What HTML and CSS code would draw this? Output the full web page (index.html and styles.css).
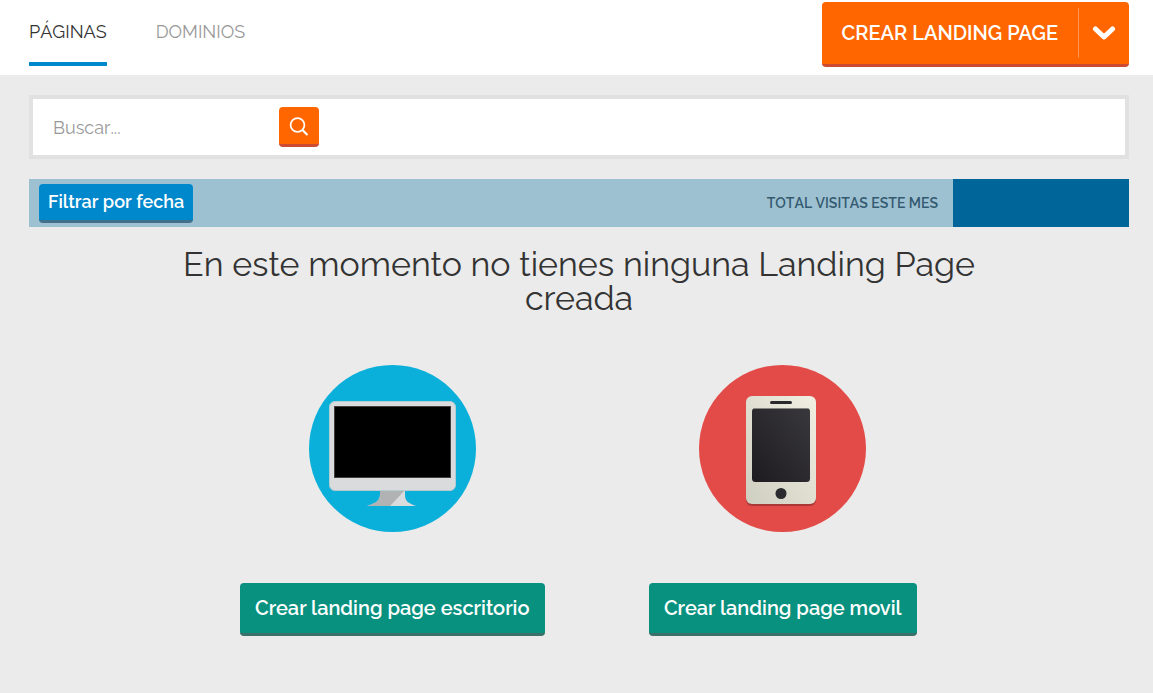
FILE: index.html
```html
<!DOCTYPE html>
<html lang="es">
<head>
  <meta charset="UTF-8">
  <title>Landing Pages</title>
  <meta name="viewport" content="width=device-width, initial-scale=1.0">
  <link rel="stylesheet" href="styles.css">
</head>
<body>
  <header class="topbar">
    <nav class="tabs">
      <a class="tab active" href="#paginas">PÁGINAS</a>
      <a class="tab" href="#dominios">DOMINIOS</a>
    </nav>
    <div class="create">
      <button class="create-main" type="button">CREAR LANDING PAGE</button>
      <button class="create-toggle" type="button" aria-label="Más opciones">
        <svg width="24" height="16" viewBox="0 0 24 16"><path d="M3.500 4l8.500 8 8.500-8" fill="none" stroke="#fff" stroke-width="5" stroke-linecap="round" stroke-linejoin="round"/></svg>
      </button>
    </div>
  </header>

  <main>
    <form class="search">
      <input class="search-input" type="text" placeholder="Buscar..." aria-label="Buscar">
      <button class="search-button" type="button" aria-label="Buscar">
        <svg width="20" height="20" viewBox="0 0 20 20" fill="none" stroke="#fff"><circle cx="8.500" cy="9" r="6.900" stroke-width="1.700"/><path d="M13.500 14l5 5" stroke-width="2.200"/></svg>
      </button>
    </form>

    <div class="stats">
      <button class="filter" type="button">Filtrar por fecha</button>
      <span class="stats-label">TOTAL VISITAS ESTE MES</span>
      <div class="stats-total"></div>
    </div>

    <section class="empty">
      <h1>En este momento no tienes ninguna Landing Page creada</h1>
      <div class="choices">
        <div class="choice">
          <svg class="device" viewBox="0 0 167 167">
            <circle cx="83.500" cy="83.500" r="83.500" fill="#0ab0d9"/>
            <path d="M71 125h25v5c0 6 3 8 11 11H58c9-3 13-5 13-12z" fill="#dadbdc"/>
            <path d="M71 125h25L81 141H58c9-3 13-5 13-12z" fill="#b1b2b3"/>
            <rect x="20.500" y="36.500" width="126" height="89" rx="5.500" fill="#dadbdc" stroke="#b5cbd2"/>
            <rect x="25.500" y="41.500" width="116" height="71" fill="#000" stroke="#433f40"/>
          </svg>
          <button class="choice-button" type="button">Crear landing page escritorio</button>
        </div>
        <div class="choice">
          <svg class="device" viewBox="0 0 167 167">
            <defs>
              <linearGradient id="shell" x1="0" y1="1" x2="1" y2="0"><stop offset="0" stop-color="#cfcfc1"/><stop offset="1" stop-color="#f0efe2"/></linearGradient>
              <linearGradient id="glass" x1="0" y1="1" x2="1" y2="0"><stop offset="0" stop-color="#1d1b20"/><stop offset="1" stop-color="#39383c"/></linearGradient>
            </defs>
            <circle cx="83.500" cy="83.500" r="83.500" fill="#e34b48"/>
            <rect x="47" y="33" width="70" height="108" rx="6" fill="#ab3836"/>
            <rect x="47" y="31" width="70" height="108" rx="6" fill="url(#shell)"/>
            <rect x="71" y="36" width="22" height="3" rx="1.500" fill="#29282c"/>
            <rect x="53" y="43" width="58" height="74" rx="3.500" fill="url(#glass)"/>
            <path d="M55 43.500h54" stroke="#88877f"/>
            <circle cx="82" cy="128.500" r="5.500" fill="#2b2a2e"/>
          </svg>
          <button class="choice-button" type="button">Crear landing page movil</button>
        </div>
      </div>
    </section>
  </main>
</body>
</html>
```
FILE: styles.css
```css
* {
  box-sizing: border-box;
}

body {
  margin: 0;
  font-family: Raleway, Lato, sans-serif;
  color: #333;
  background-color: #ebebeb;
}

button {
  border: none;
  padding: 0;
  font-family: inherit;
  font-weight: 600;
  color: #fff;
  cursor: pointer;
}

svg {
  display: block;
}

.topbar {
  display: flex;
  justify-content: space-between;
  align-items: flex-start;
  height: 75px;
  padding: 2px 24px 0 29px;
  background-color: #fff;
}

.tabs {
  display: flex;
  gap: 49px;
}

.tab {
  height: 64px;
  font-size: 18px;
  line-height: 60px;
  font-weight: 400;
  font-kerning: none;
  color: #999;
  text-decoration: none;
}

.tab.active {
  color: #333;
  border-bottom: 4px solid #08c;
}

.create {
  display: flex;
  align-items: center;
  height: 65px;
  background-color: #f60;
  border-bottom: 3px solid #cc4b33;
  border-radius: 4px;
}

.create-main {
  height: 62px;
  padding: 0 20px;
  font-size: 20px;
  background: none;
}

.create-toggle {
  display: flex;
  align-items: center;
  justify-content: center;
  width: 51px;
  height: 50px;
  background: none;
  border-left: 1px solid #ff944d;
}

main {
  padding: 20px 24px 20px 29px;
}

.search {
  display: flex;
  align-items: center;
  height: 64px;
  padding: 0 20px;
  background-color: #fff;
  border: 4px solid #e1e1e1;
}

.search-input {
  width: 226px;
  padding: 0;
  border: none;
  outline: none;
  font-family: inherit;
  font-size: 18px;
  font-weight: 400;
  font-kerning: none;
  color: #333;
}

.search-input::placeholder {
  color: #999;
}

.search-button {
  display: flex;
  align-items: center;
  justify-content: center;
  width: 40px;
  height: 40px;
  background-color: #f60;
  border-bottom: 3px solid #cc4b33;
  border-radius: 4px;
}

.stats {
  display: flex;
  align-items: center;
  height: 48px;
  margin-top: 20px;
  padding-left: 10px;
  background-color: #9ec1d2;
}

.filter {
  height: 39px;
  padding: 0 9px;
  font-size: 18px;
  font-kerning: none;
  background-color: #08c;
  border-bottom: 3px solid #40708c;
  border-radius: 4px;
}

.stats-label {
  margin-left: auto;
  padding-right: 15px;
  font-size: 14px;
  font-weight: 600;
  font-kerning: none;
  color: #345a70;
}

.stats-total {
  width: 176px;
  height: 48px;
  background-color: #069;
}

.empty {
  max-width: 798px;
  margin: 20px auto 0;
}

h1 {
  margin: 0;
  font-size: 34px;
  line-height: 34px;
  font-weight: 400;
  text-align: center;
}

.choices {
  display: flex;
  margin-top: 50px;
  padding-left: 17px;
}

.choice {
  display: flex;
  flex: 1;
  flex-direction: column;
  align-items: center;
  gap: 51px;
}

.device {
  width: 167px;
  height: 167px;
}

.choice-button {
  height: 53px;
  padding: 0 15px;
  font-size: 20px;
  background-color: #08917e;
  border-bottom: 3px solid #3b716a;
  border-radius: 4px;
}
```
